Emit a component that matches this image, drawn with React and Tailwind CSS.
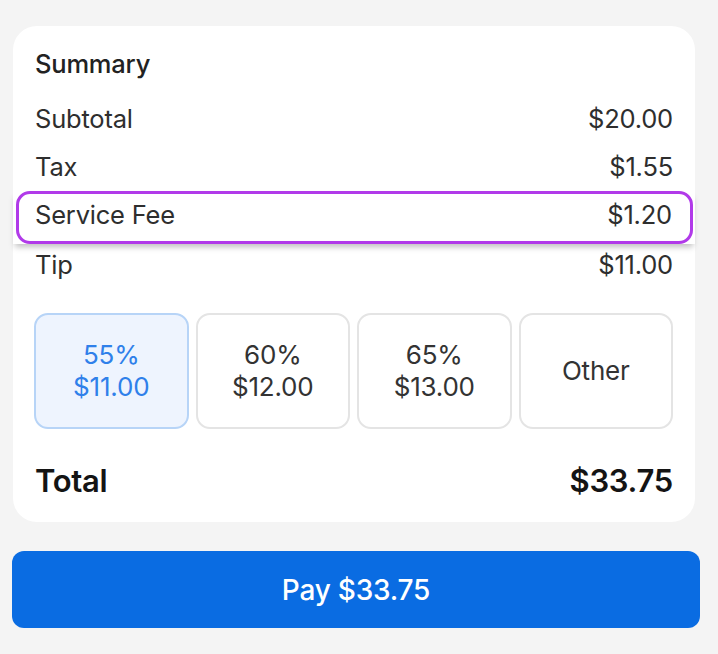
import React from "react";

const font = { fontFamily: "Inter, 'Noto Sans', sans-serif" };

function Row({ label, value, className = "" }) {
  return (
    <div className={`flex items-center justify-between text-[25.5px] tracking-[-0.2px] text-[#2e2e2e] ${className}`}>
      <span>{label}</span>
      <span>{value}</span>
    </div>
  );
}

function TipButton({ pct, amt, active }) {
  return (
    <button
      className={`flex h-[116px] flex-col items-center justify-center rounded-[14px] border-2 text-[26px] leading-[32px] tracking-[-0.2px] ${
        active
          ? "border-[#b7d4f7] bg-[#eef4fe] text-[#2f80ea]"
          : "border-[#e4e4e4] bg-white text-[#333333]"
      }`}
    >
      {pct && <span>{pct}</span>}
      <span>{amt}</span>
    </button>
  );
}

export default function App() {
  return (
    <div className="min-h-[654px] w-[718px] bg-[#f4f4f4] px-[12px] pt-[26px]" style={font}>
      <div className="ml-[1px] w-[682px] rounded-[24px] bg-white px-[22px] pb-[21px] pt-[22px]">
        <div className="text-[25.5px] font-medium leading-[32px] tracking-[-0.2px] text-[#222222]">Summary</div>
        <div className="mt-[15px]">
          <Row label="Subtotal" value="$20.00" className="h-[48px]" />
          <Row label="Tax" value="$1.55" className="h-[48px]" />
          <div className="relative z-10 -mx-[22px] h-[53px] bg-white px-[3px] pr-[2px] shadow-[0_5px_6px_-2px_rgba(0,0,0,0.25)]">
            <div className="flex h-full items-center justify-between rounded-[14px] border-[3px] border-[#b13ae9] pb-[5px] pl-[16px] pr-[18px] text-[25.5px] tracking-[-0.2px] text-[#2e2e2e]">
              <span>Service Fee</span>
              <span>$1.20</span>
            </div>
          </div>
          <Row label="Tip" value="$11.00" className="h-[42px]" />
        </div>
        <div className="-ml-[1px] mt-[27px] grid grid-cols-4 gap-[7px]">
          <TipButton pct="55%" amt="$11.00" active />
          <TipButton pct="60%" amt="$12.00" />
          <TipButton pct="65%" amt="$13.00" />
          <TipButton amt="Other" />
        </div>
        <div className="mt-[32px] flex h-[40px] items-center justify-between text-[31px] font-semibold tracking-[-0.3px] text-[#141414]">
          <span>Total</span>
          <span>$33.75</span>
        </div>
      </div>
      <button className="mt-[29px] flex h-[77px] w-[688px] items-center justify-center rounded-[12px] bg-[#0a6ce2] text-[28px] font-medium tracking-[-0.2px] text-white">
        Pay $33.75
      </button>
    </div>
  );
}
